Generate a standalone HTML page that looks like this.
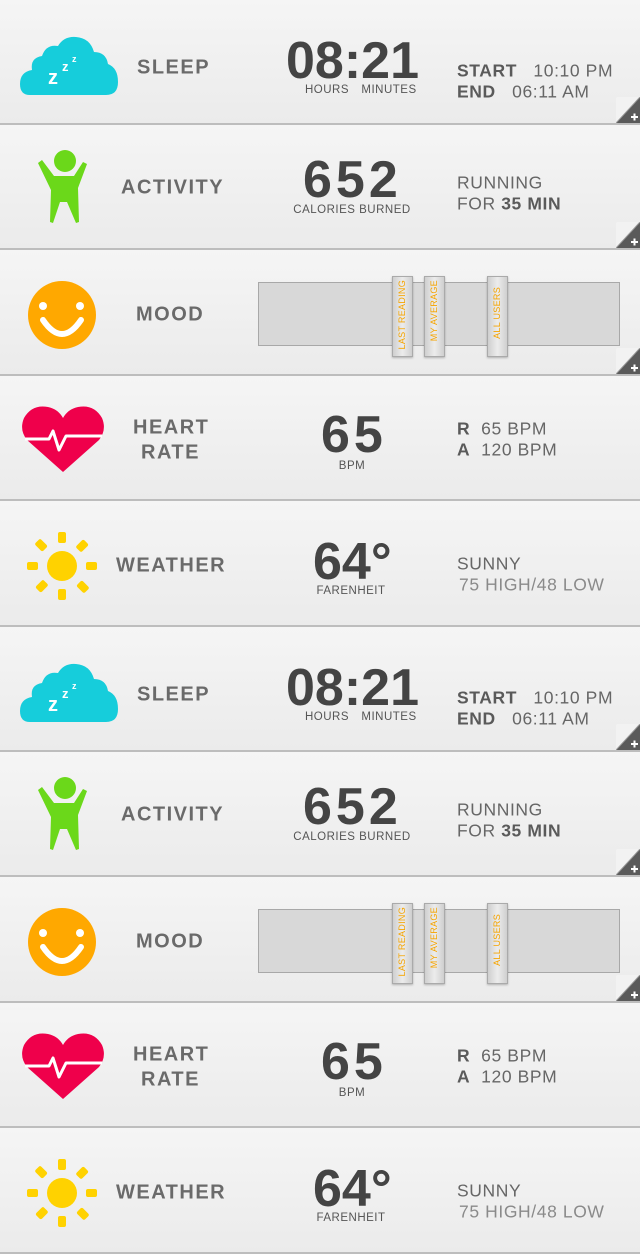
<!DOCTYPE html>
<html><head><meta charset="utf-8"><style>
*{margin:0;padding:0;box-sizing:border-box}
body{width:640px;height:1200px;overflow:hidden;background:#efefef;font-family:"Liberation Sans",sans-serif;color:#666}
.row{position:relative;width:640px;background:linear-gradient(#f5f5f5,#ebebeb);border-bottom:2px solid #bdbdbd}
.a{position:absolute;white-space:nowrap}
.lbl{font-weight:bold;font-size:20px;letter-spacing:1.5px;color:#6a6a6a;transform:translateY(-50%)}
.big{font-weight:bold;font-size:52px;color:#444;letter-spacing:2px;transform:translateY(-50%)}
.sm{font-size:11.5px;color:#555;letter-spacing:.5px;transform:translate(-50%,-50%)}
.r{font-size:17.5px;color:#666;letter-spacing:.6px;transform:translateY(-50%)}
.r b{color:#5a5a5a}
.fold{position:absolute;right:0;bottom:0;width:24px;height:26px}
.bar{position:absolute;left:258px;top:32px;width:362px;height:64px;background:#d8d8d8;border:1px solid #a8a8a8}
.tab{position:absolute;top:26px;width:21px;height:81px;background:linear-gradient(90deg,#cfcfcf,#ececec 50%,#cfcfcf);border:1px solid #aaa;box-shadow:0 1px 2px rgba(0,0,0,.25);display:flex;justify-content:center;align-items:flex-start;padding-top:3px}
.tab span{writing-mode:vertical-rl;transform:rotate(180deg);font-size:9px;color:#f5a400;letter-spacing:.3px;white-space:nowrap;line-height:1}
</style></head><body>
<svg width="0" height="0" style="position:absolute">
<defs>
<symbol id="fold" viewBox="0 0 24 26"><path d="M24 0 L24 26 L0 26 Z" fill="#5a5a5a"/><path d="M24 0 L0 26 L0 2 Q0 0 2 0Z" fill="#f2f2f2"/><path d="M24 0 L0 26" stroke="#999" stroke-width="1"/><path d="M15 20h7M18.5 16.5v7" stroke="#fff" stroke-width="2"/></symbol>
</defs></svg>

<div id="set">
<div class="row" style="height:125px">
<svg class="a" style="left:20px;top:36px" width="100" height="60" viewBox="0 0 100 60"><path d="M10 59 Q0 59 0 48 Q0 36 12 34 Q10 22 22 20 Q26 8 38 10 Q44 0 56 1 Q70 2 74 16 Q86 16 88 28 Q98 32 98 46 Q98 59 86 59Z" fill="#16cddb"/><text x="28" y="48" font-family="Liberation Sans" font-weight="bold" font-size="20" fill="#fff">z</text><text x="42" y="35" font-family="Liberation Sans" font-weight="bold" font-size="13" fill="#fff">z</text><text x="52" y="26" font-family="Liberation Sans" font-weight="bold" font-size="9" fill="#fff">z</text></svg>
<div class="a lbl" style="left:137px;top:68px">SLEEP</div>
<div class="a big" style="left:286px;top:61px;letter-spacing:0">08:21</div>
<div class="a sm" style="left:327px;top:90px">HOURS</div><div class="a sm" style="left:389px;top:90px">MINUTES</div>
<div class="a r" style="left:457px;top:71px"><b>START</b>&nbsp;&nbsp; 10:10 PM</div>
<div class="a r" style="left:457px;top:92px"><b>END</b>&nbsp;&nbsp; 06:11 AM</div>
<svg class="fold"><use href="#fold"/></svg>
</div>
<div class="row" style="height:125px">
<svg class="a" style="left:37px;top:25px" width="52" height="75" viewBox="0 0 52 75"><circle cx="28" cy="11" r="11" fill="#6bd81a"/><path d="M1 13 L5 10 L17 26 L37 26 L46 12 L50 14 L41 38 L42 72 L39 73 L30 52 L23 52 L16 73 L13 72 L14 40Z" fill="#6bd81a"/></svg>
<div class="a lbl" style="left:121px;top:63px">ACTIVITY</div>
<div class="a big" style="left:303px;top:55px;letter-spacing:4px">652</div>
<div class="a sm" style="left:352px;top:85px">CALORIES BURNED</div>
<div class="a r" style="left:457px;top:58px">RUNNING</div>
<div class="a r" style="left:457px;top:79px">FOR <b>35 MIN</b></div>
<svg class="fold"><use href="#fold"/></svg>
</div>
<div class="row" style="height:126px">
<svg class="a" style="left:27px;top:30px" width="70" height="70" viewBox="0 0 70 70"><circle cx="35" cy="35" r="34" fill="#ffa800"/><circle cx="16" cy="26" r="4" fill="#fff"/><circle cx="53" cy="26" r="4" fill="#fff"/><path d="M16 40 Q35 68 54 40" stroke="#fff" stroke-width="6" fill="none" stroke-linecap="round"/></svg>
<div class="a lbl" style="left:136px;top:65px">MOOD</div>
<div class="bar"></div>
<div class="tab" style="left:392px"><span>LAST READING</span></div>
<div class="tab" style="left:424px"><span>MY AVERAGE</span></div>
<div class="tab" style="left:487px;padding-top:10px"><span>ALL USERS</span></div>
<svg class="fold"><use href="#fold"/></svg>
</div>
<div class="row" style="height:125px">
<svg class="a" style="left:22px;top:30px" width="82" height="67" viewBox="0 0 82 67"><path d="M41 66 L5 34 Q-3 24 2 12 Q10 -2 26 1 Q36 3 41 12 Q46 3 56 1 Q72 -2 80 12 Q85 24 77 34Z" fill="#ef004b"/><path d="M3 33 L27 33 L31 25 L37 44 L44 30 L80 30" stroke="#fff" stroke-width="3" fill="none" stroke-linejoin="round"/></svg>
<div class="a lbl" style="left:133px;top:52px">HEART</div>
<div class="a lbl" style="left:141px;top:77px">RATE</div>
<div class="a big" style="left:321px;top:59px;letter-spacing:4px">65</div>
<div class="a sm" style="left:352px;top:90px">BPM</div>
<div class="a r" style="left:457px;top:53px"><b>R</b>&nbsp; 65 BPM</div>
<div class="a r" style="left:457px;top:74px"><b>A</b>&nbsp; 120 BPM</div>
</div>
<div class="row" style="height:126px">
<svg class="a" style="left:26px;top:29px" width="72" height="72" viewBox="0 0 72 72"><circle cx="36" cy="36" r="15" fill="#ffd200"/><g fill="#ffd200"><rect x="32" y="2" width="8" height="11" rx="2"/><rect x="32" y="59" width="8" height="11" rx="2"/><rect x="1" y="32" width="11" height="8" rx="2"/><rect x="60" y="32" width="11" height="8" rx="2"/><g transform="rotate(45 36 36)"><rect x="32" y="2" width="8" height="11" rx="2"/><rect x="32" y="59" width="8" height="11" rx="2"/><rect x="1" y="32" width="11" height="8" rx="2"/><rect x="60" y="32" width="11" height="8" rx="2"/></g></g></svg>
<div class="a lbl" style="left:116px;top:65px">WEATHER</div>
<div class="a big" style="left:313px;top:61px;letter-spacing:0">64°</div>
<div class="a sm" style="left:351px;top:90px">FARENHEIT</div>
<div class="a r" style="left:457px;top:63px">SUNNY</div>
<div class="a r" style="left:459px;top:84px;color:#8a8a8a">75 HIGH/48 LOW</div>
</div>
</div>
<div id="set2"></div>
<script>document.getElementById('set2').innerHTML=document.getElementById('set').innerHTML;</script>
</body></html>
